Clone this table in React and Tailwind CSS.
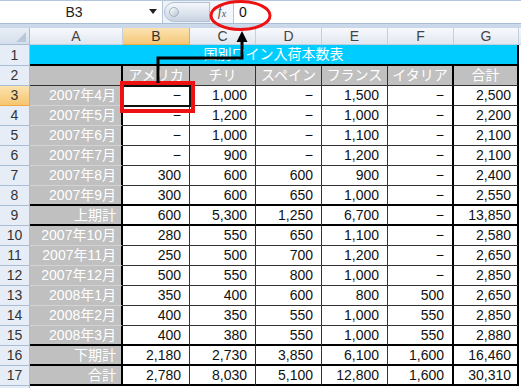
import React from 'react';

const colW = ['w-[93px]', 'w-[67px]', 'w-[66px]', 'w-[66px]', 'w-[66px]', 'w-[66px]', 'w-[65px]'];
const letters = ['A', 'B', 'C', 'D', 'E', 'F', 'G'];
const heads = ['アメリカ', 'チリ', 'スペイン', 'フランス', 'イタリア', '合計'];

const D = '−';
const rows = [
  { n: 3, label: '2007年4月', v: [D, '1,000', D, '1,500', D, '2,500'] },
  { n: 4, label: '2007年5月', v: [D, '1,200', D, '1,000', D, '2,200'] },
  { n: 5, label: '2007年6月', v: [D, '1,000', D, '1,100', D, '2,100'] },
  { n: 6, label: '2007年7月', v: [D, '900', D, '1,200', D, '2,100'] },
  { n: 7, label: '2007年8月', v: ['300', '600', '600', '900', D, '2,400'] },
  { n: 8, label: '2007年9月', v: ['300', '600', '650', '1,000', D, '2,550'], thick: true },
  { n: 9, label: '上期計', v: ['600', '5,300', '1,250', '6,700', D, '13,850'], thick: true },
  { n: 10, label: '2007年10月', v: ['280', '550', '650', '1,100', D, '2,580'] },
  { n: 11, label: '2007年11月', v: ['250', '500', '700', '1,200', D, '2,650'] },
  { n: 12, label: '2007年12月', v: ['500', '550', '800', '1,000', D, '2,850'] },
  { n: 13, label: '2008年1月', v: ['350', '400', '600', '800', '500', '2,650'] },
  { n: 14, label: '2008年2月', v: ['400', '350', '550', '1,000', '550', '2,850'] },
  { n: 15, label: '2008年3月', v: ['400', '380', '550', '1,000', '550', '2,880'], thick: true },
  { n: 16, label: '下期計', v: ['2,180', '2,730', '3,850', '6,100', '1,600', '16,460'], thick: true },
  { n: 17, label: '合計', v: ['2,780', '8,030', '5,100', '12,800', '1,600', '30,310'], thick: true },
];

const RowHead = ({ n, active }) => (
  <div
    className={`w-[30px] shrink-0 flex items-center justify-center border-r border-b text-[14px] ${
      active
        ? 'bg-gradient-to-b from-[#fbe2ae] to-[#f6c66f] border-[#f0a945] text-[#333]'
        : 'bg-[#e6edf7] border-[#a9bdd5] text-[#333]'
    }`}
  >
    {n}
  </div>
);

const App = () => {
  return (
    <div
      className="relative w-[521px] h-[388px] overflow-hidden bg-white"
      style={{ fontFamily: '"Liberation Sans", "Noto Sans CJK JP", sans-serif' }}
    >
      {/* Formula bar */}
      <div className="h-[28px] bg-gradient-to-b from-[#dfe8f4] to-[#c9d7ea] border-t border-[#b4c6dd]">
        <div className="flex h-[23px] bg-white border-b border-[#a9bdd6]">
          <div className="w-[163px] shrink-0 flex items-center border-r border-[#b5c6da]">
            <span className="w-[148px] text-center text-[14px] text-[#222]">B3</span>
            <svg width="10" height="6" viewBox="0 0 10 6" className="ml-[0px]">
              <polygon points="1,0 9,0 5,5" fill="#222" />
            </svg>
          </div>
          <div className="w-[48px] shrink-0 flex items-center bg-[#eef2f7]">
            <div className="h-[20px] w-[46px] ml-[1px] rounded-l-full bg-gradient-to-b from-[#f4f7fb] via-[#dfe6ef] to-[#c8d3e0] border border-[#b2c0d2] flex items-center">
              <div className="w-[10px] h-[10px] ml-[4px] rounded-full bg-gradient-to-br from-white to-[#b7c3d2] border border-[#a3b1c3]" />
            </div>
          </div>
          <div className="w-[22px] shrink-0 flex items-center justify-center bg-[#f3f6fa] text-[#555]" style={{ fontFamily: '"Liberation Serif", serif' }}>
            <span className="italic text-[14px] leading-none">f</span>
            <span className="italic text-[10px] leading-none mt-[3px]">x</span>
          </div>
          <div className="flex-1 flex items-center border-l border-[#b5c6da] pl-[5px] text-[14px] text-[#111]">0</div>
        </div>
      </div>

      {/* Column headers */}
      <div className="flex h-[17px]">
        <div className="w-[30px] shrink-0 relative bg-gradient-to-b from-[#e9eef6] to-[#d5dfec] border-r border-b border-[#a9bdd5]">
          <svg width="10" height="10" viewBox="0 0 10 10" className="absolute right-[3px] bottom-[2px]">
            <polygon points="10,0 10,10 0,10" fill="#b8c7d9" />
          </svg>
        </div>
        {letters.map((l, i) => (
          <div
            key={l}
            className={`${colW[i]} shrink-0 flex items-center justify-center text-[14px] leading-none border-r border-b ${
              l === 'B'
                ? 'bg-gradient-to-b from-[#fbe3b3] to-[#f5c877] border-[#f0a945] text-[#333]'
                : 'bg-gradient-to-b from-[#f8f9fc] to-[#e1e7f0] border-[#c3d0e0] text-[#444]'
            }`}
          >
            {l}
          </div>
        ))}
        <div className="flex-1 bg-gradient-to-b from-[#f8f9fc] to-[#e1e7f0] border-b border-[#c3d0e0]" />
      </div>

      {/* Row 1: title */}
      <div className="flex h-[21px]">
        <RowHead n={1} />
        <div className="w-[489px] shrink-0 bg-[#00ccff] border-r-2 border-b-2 border-black flex items-center justify-center text-white text-[14px]">
          国別ワイン入荷本数表
        </div>
      </div>

      {/* Row 2: column titles */}
      <div className="flex h-[20px]">
        <RowHead n={2} />
        <div className="w-[93px] shrink-0 bg-[#c0c0c0] border-r-2 border-b border-r-black border-b-[#333]" />
        {heads.map((h, i) => (
          <div
            key={h}
            className={`${colW[i + 1]} shrink-0 bg-[#c0c0c0] flex items-center justify-center text-white text-[14px] border-b border-b-[#333] ${
              i === 4 || i === 5 ? 'border-r-2 border-r-black' : 'border-r border-r-[#333]'
            }`}
          >
            {h}
          </div>
        ))}
      </div>

      {/* Data rows */}
      {rows.map((r) => (
        <div key={r.n} className="flex h-[20px]">
          <RowHead n={r.n} active={r.n === 3} />
          <div
            className={`w-[93px] shrink-0 bg-[#c0c0c0] border-r-2 border-r-black flex items-center justify-end pr-[5px] text-white text-[14px] ${
              r.thick ? 'border-b-2 border-b-black' : 'border-b border-b-[#d2d2d2]'
            }`}
          >
            {r.label}
          </div>
          {r.v.map((v, i) => (
            <div
              key={i}
              className={`${colW[i + 1]} shrink-0 flex items-center justify-end text-[14px] text-[#111] ${
                i === 5 ? 'pr-[6px]' : 'pr-[8px]'
              } ${i === 4 || i === 5 ? 'border-r-2 border-r-black' : 'border-r border-r-[#333]'} ${
                r.thick ? 'border-b-2 border-b-black' : 'border-b border-b-[#333]'
              }`}
            >
              {v}
            </div>
          ))}
        </div>
      ))}

      <div className="flex h-[4px]">
        <div className="w-[30px] bg-[#e6edf7] border-r border-[#a9bdd5]" />
      </div>

      {/* Annotations */}
      <svg className="absolute left-0 top-0 pointer-events-none" width="521" height="388" viewBox="0 0 521 388">
        <rect x="123" y="86" width="67" height="20" fill="none" stroke="#111" strokeWidth="2" />
        <rect x="122" y="83" width="71" height="28" fill="none" stroke="#ee1111" strokeWidth="4" />
        <path d="M158 83 V58 H242 V40" fill="none" stroke="#000" strokeWidth="3" />
        <polygon points="242,31 236.5,42 247.5,42" fill="#000" />
        <ellipse cx="240.5" cy="15.5" rx="29.5" ry="14" fill="none" stroke="#ee1111" strokeWidth="3" />
      </svg>
    </div>
  );
};

export default App;
